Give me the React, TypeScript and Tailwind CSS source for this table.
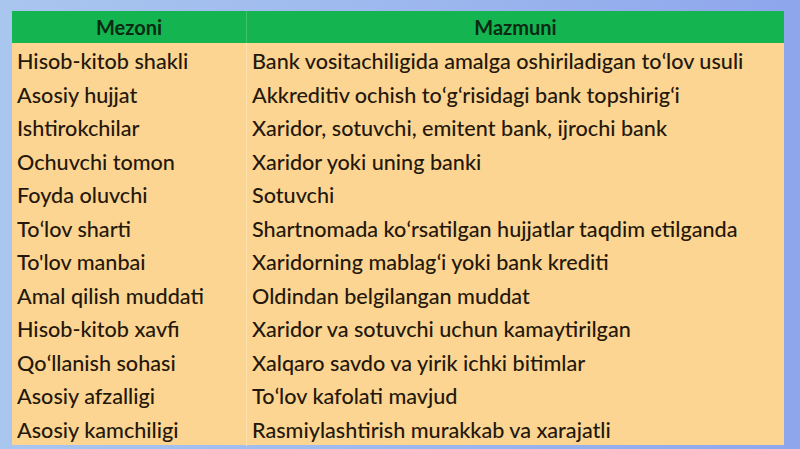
import React from "react";

const rows: [string, string][] = [
  ["Hisob-kitob shakli", "Bank vositachiligida amalga oshiriladigan toʻlov usuli"],
  ["Asosiy hujjat", "Akkreditiv ochish toʻgʻrisidagi bank topshirigʻi"],
  ["Ishtirokchilar", "Xaridor, sotuvchi, emitent bank, ijrochi bank"],
  ["Ochuvchi tomon", "Xaridor yoki uning banki"],
  ["Foyda oluvchi", "Sotuvchi"],
  ["Toʻlov sharti", "Shartnomada koʻrsatilgan hujjatlar taqdim etilganda"],
  ["To'lov manbai", "Xaridorning mablagʻi yoki bank krediti"],
  ["Amal qilish muddati", "Oldindan belgilangan muddat"],
  ["Hisob-kitob xavfi", "Xaridor va sotuvchi uchun kamaytirilgan"],
  ["Qoʻllanish sohasi", "Xalqaro savdo va yirik ichki bitimlar"],
  ["Asosiy afzalligi", "Toʻlov kafolati mavjud"],
  ["Asosiy kamchiligi", "Rasmiylashtirish murakkab va xarajatli"],
];

export default function App() {
  return (
    <div
      className="w-[800px] h-[449px] overflow-hidden bg-gradient-to-r from-[#a9c6ef] via-[#9db8ee] to-[#8ea6ec] pt-[11px] pl-[12px]"
      style={{ fontFamily: "Lato, 'Noto Sans', sans-serif" }}
    >
      <div className="w-[772px] bg-[#fdd592]">
        <div className="grid grid-cols-[235px_537px] h-[32px] bg-[#14b450] text-[#0b2a14] font-bold text-[20px]">
          <div className="flex items-center justify-center border-r border-[#3fc46a]">Mezoni</div>
          <div className="flex items-center justify-center">Mazmuni</div>
        </div>
        {rows.map(([a, b], i) => (
          <div key={i} className="grid grid-cols-[235px_537px] h-[33.5px] text-[21.6px] font-medium text-[#24180c]">
            <div className="flex items-center pl-[5px] pt-[2px] border-r border-[#fde2b0] whitespace-nowrap">{a}</div>
            <div className="flex items-center pl-[5px] pt-[2px] whitespace-nowrap">{b}</div>
          </div>
        ))}
      </div>
    </div>
  );
}
